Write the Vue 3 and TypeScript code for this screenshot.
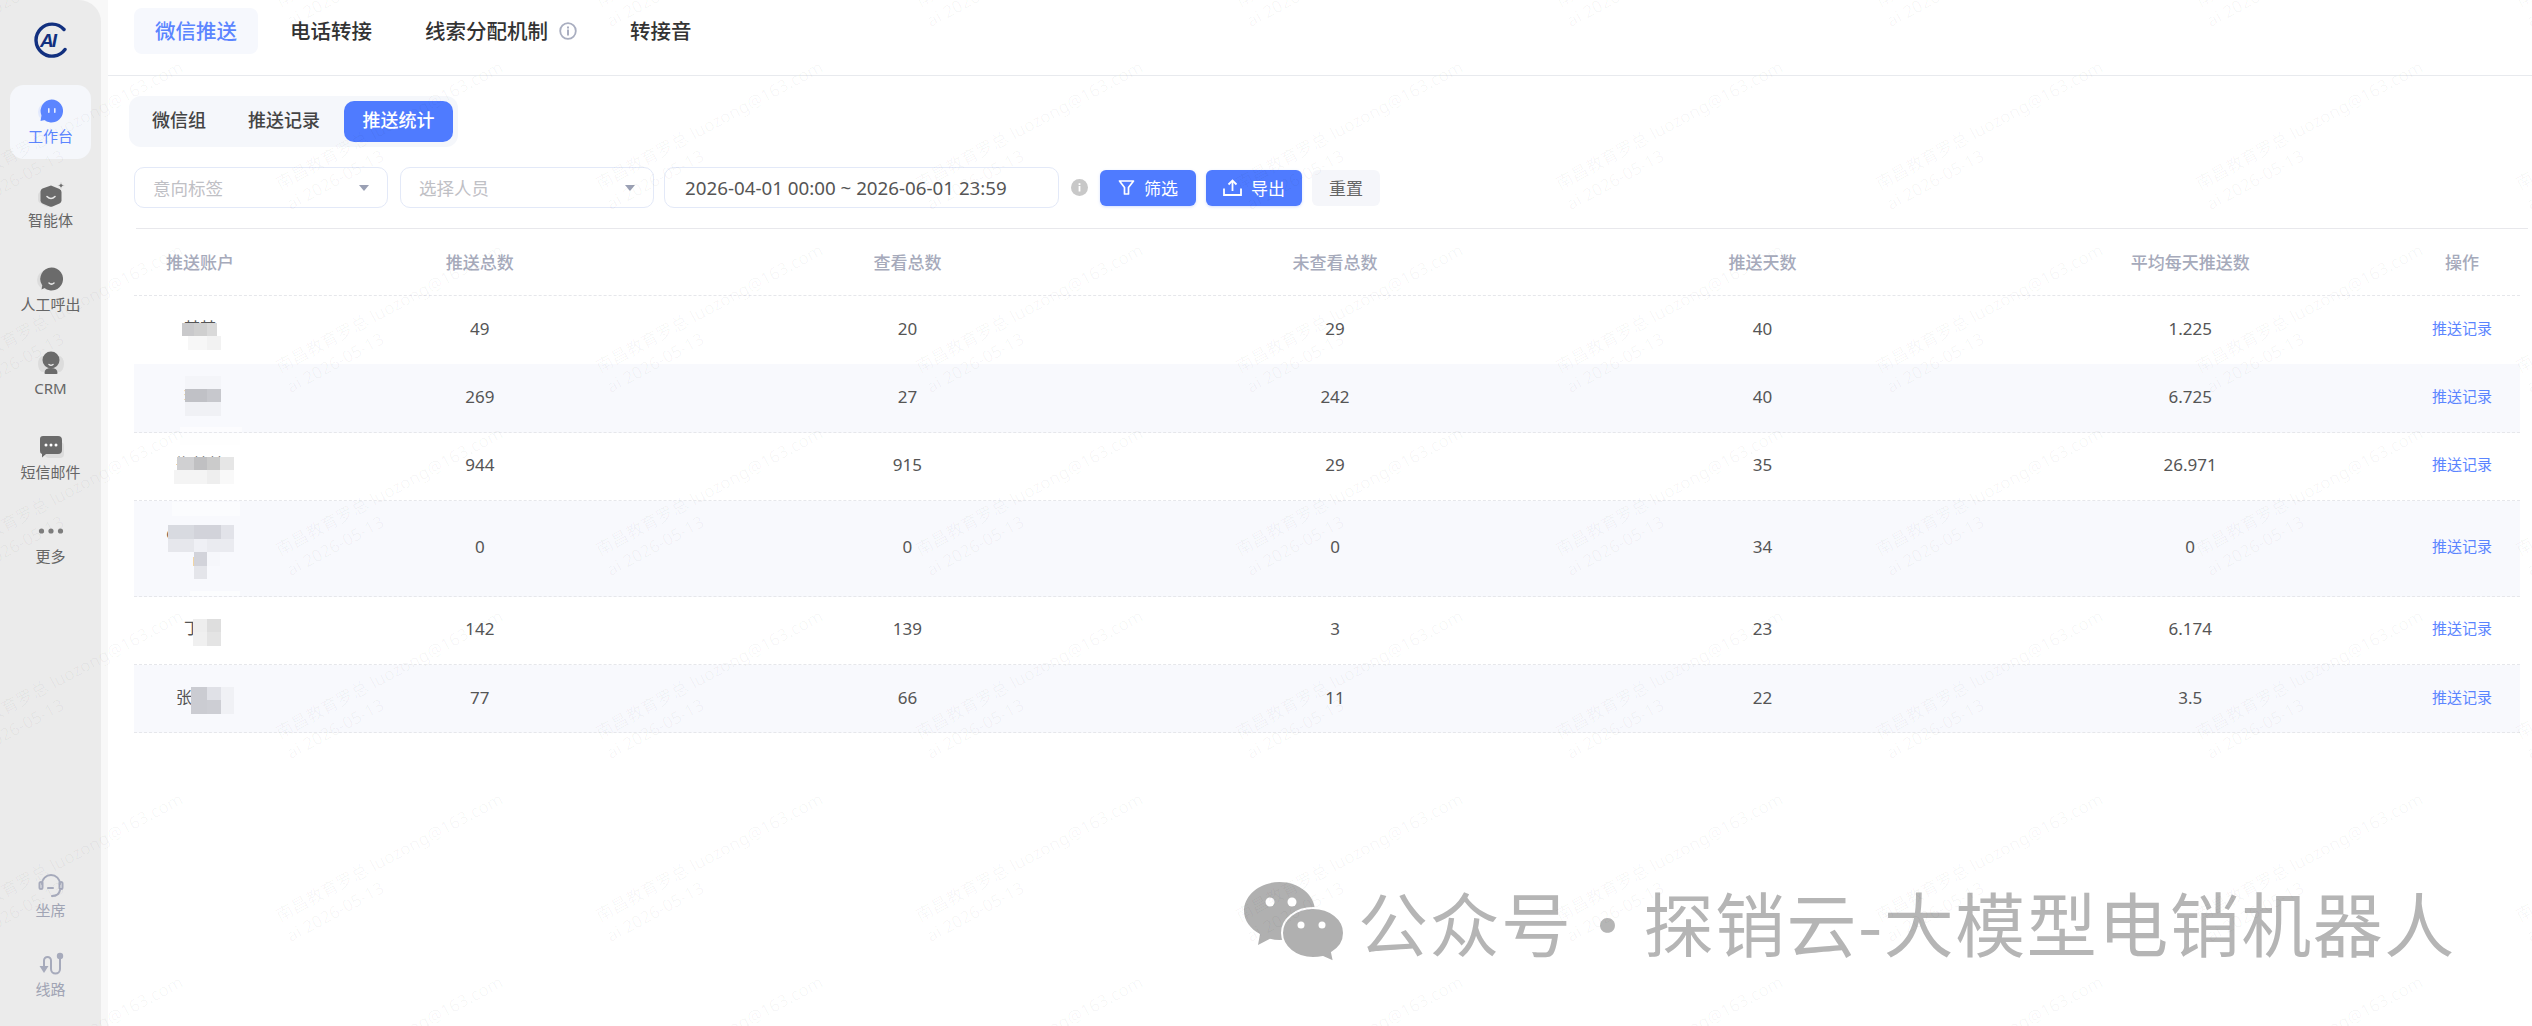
<script setup lang="ts">
type Block = [number, number, number, number, string];

interface Row {
  top: number;
  name: string;
  cells: (string | number)[];
  mosaic: Block[];
}

const primaryTabs = ["微信推送", "电话转接", "线索分配机制", "转接音"];
const subTabs = ["微信组", "推送记录", "推送统计"];
const headers = ["推送账户", "推送总数", "查看总数", "未查看总数", "推送天数", "平均每天推送数", "操作"];

// mosaic blocks are in page coordinates, the same as the row tops
const rows: Row[] = [
  {
    top: 296,
    name: "某某",
    cells: [49, 20, 29, 40, 1.225],
    mosaic: [
      [182, 323, 12, 13, "#c9c9cb"],
      [194, 323, 13, 13, "#cfcfcf"],
      [207, 323, 10, 13, "#d9d9d9"],
      [188, 336, 19, 14, "#f7f7f7"],
      [207, 336, 14, 14, "#f2f2f2"],
    ],
  },
  {
    top: 364,
    name: "李某",
    cells: [269, 27, 242, 40, 6.725],
    mosaic: [
      [185, 376, 36, 13, "#f4f5f9"],
      [185, 389, 22, 13, "#c0c1c6"],
      [207, 389, 14, 13, "#c7c8cd"],
      [185, 402, 36, 14, "#f0f1f5"],
      [180, 427, 62, 5, "#fcfcfe"],
    ],
  },
  {
    top: 432,
    name: "郑某某",
    cells: [944, 915, 29, 35, 26.971],
    mosaic: [
      [180, 432, 60, 12, "#fefefe"],
      [177, 456, 17, 13, "#d0d0d2"],
      [194, 456, 13, 13, "#c0c0c2"],
      [207, 456, 13, 13, "#cbcbcb"],
      [220, 456, 14, 13, "#e6e6e6"],
      [174, 469, 33, 14, "#f4f4f4"],
      [207, 469, 13, 14, "#eeeeee"],
      [220, 469, 14, 14, "#f9f9f9"],
    ],
  },
  {
    top: 500,
    name: "chenxiao m",
    cells: [0, 0, 0, 34, 0],
    mosaic: [
      [172, 501, 68, 14, "#fbfcfe"],
      [168, 524, 26, 14, "#d8dae0"],
      [194, 524, 27, 14, "#d2d3da"],
      [221, 524, 13, 14, "#e2e3e9"],
      [168, 538, 26, 13, "#e6e7ec"],
      [194, 538, 13, 13, "#eff0f5"],
      [207, 538, 27, 13, "#eaebf0"],
      [194, 551, 13, 14, "#d2d3da"],
      [207, 551, 13, 14, "#f6f7fb"],
      [194, 565, 13, 13, "#e4e5ea"],
      [190, 590, 50, 5, "#fcfdfe"],
    ],
  },
  {
    top: 596,
    name: "丁某",
    cells: [142, 139, 3, 23, 6.174],
    mosaic: [
      [193, 618, 14, 13, "#eeeeee"],
      [207, 618, 14, 13, "#dedede"],
      [193, 631, 14, 14, "#f0f0f0"],
      [207, 631, 14, 14, "#e4e4e4"],
    ],
  },
  {
    top: 664,
    name: "张某某",
    cells: [77, 66, 11, 22, 3.5],
    mosaic: [
      [191, 686, 16, 13, "#cbccd2"],
      [207, 686, 14, 13, "#e0e1e7"],
      [221, 686, 13, 13, "#f0f1f5"],
      [191, 699, 16, 14, "#cbccd2"],
      [207, 699, 14, 14, "#cdced4"],
      [221, 699, 13, 14, "#f0f1f5"],
    ],
  },
];

const blockStyle = (b: Block, top: number) => ({
  left: `${b[0] - 134}px`,
  top: `${b[1] - top}px`,
  width: `${b[2]}px`,
  height: `${b[3]}px`,
  background: b[4],
});

const watermarks = Array.from({ length: 63 }, (_, i) => i);
</script>

<template>
  <div class="app">
    <aside class="sidebar">
      <svg class="logo" viewBox="0 0 36 36" aria-label="logo">
        <path d="M31 7.500A16 16 0 1 0 32 27.500" fill="none" stroke="#12307f" stroke-width="3.400" stroke-linecap="round" />
        <text x="7" y="25" class="logo-text">AI</text>
      </svg>

      <div class="nav">
        <div class="nav-item active">
          <svg class="nav-icon" viewBox="0 0 28 26">
            <circle cx="11" cy="14" r="10" fill="#e2e9fd" />
            <path d="M14.500 1.500a11.500 11.500 0 1 1-7 20.600L3.500 23l1-5.500A11.500 11.500 0 0 1 14.500 1.500z" fill="#5b85ff" />
            <rect x="11" y="10" width="1.600" height="5" rx=".8" fill="#fff" opacity=".85" />
            <rect x="17" y="10" width="1.600" height="5" rx=".8" fill="#fff" opacity=".85" />
          </svg>
          <span>工作台</span>
        </div>
        <div class="nav-item">
          <svg class="nav-icon" viewBox="0 0 28 26">
            <path d="M3 10l8-3 7 6v8l-8 4-7-4q-2-1-2-3v-5q0-2 2-3z" fill="#dcdcdc" />
            <path d="M14 3.500l8.500 3.500q2 1 2 3v8.500q0 2-2 3l-7 3q-1.500.5-3 0l-7-3q-2-1-2-3V9.500q0-2 2-3z" fill="#6b6b6b" />
            <path d="M10 14.500q4 4 8 0" fill="none" stroke="#e8e8e8" stroke-width="1.600" stroke-linecap="round" />
            <path d="M24 0l1 2.600 2.600 1-2.600 1-1 2.600-1-2.600-2.600-1 2.600-1z" fill="#6b6b6b" stroke="#ebebeb" stroke-width=".8" />
          </svg>
          <span>智能体</span>
        </div>
        <div class="nav-item">
          <svg class="nav-icon" viewBox="0 0 28 26">
            <circle cx="10" cy="14" r="10" fill="#dcdcdc" />
            <path d="M14.500 1.500a11.500 11.500 0 1 1-7 20.600L4.500 23.500l.8-4A11.500 11.500 0 0 1 14.500 1.500z" fill="#6b6b6b" />
            <path d="M12 17q2.500 2.200 5 0" fill="none" stroke="#e8e8e8" stroke-width="1.500" stroke-linecap="round" />
          </svg>
          <span>人工呼出</span>
        </div>
        <div class="nav-item">
          <svg class="nav-icon" viewBox="0 0 28 26">
            <ellipse cx="6" cy="14" rx="5" ry="8" fill="#dcdcdc" />
            <ellipse cx="22" cy="14" rx="5" ry="8" fill="#dcdcdc" />
            <circle cx="14" cy="10" r="8.500" fill="#6b6b6b" />
            <path d="M7.500 23q0-5 6.500-5t6.500 5q0 1-1 1h-11q-1 0-1-1z" fill="#6b6b6b" />
            <path d="M12 14.500q2 1.500 4 0" fill="none" stroke="#e8e8e8" stroke-width="1.500" stroke-linecap="round" />
          </svg>
          <span>CRM</span>
        </div>
        <div class="nav-item">
          <svg class="nav-icon" viewBox="0 0 28 26">
            <rect x="8" y="8" width="19" height="16" rx="4" fill="#dcdcdc" />
            <path d="M6 2h15a4 4 0 0 1 4 4v10a4 4 0 0 1-4 4H9l-4 3.500V20a3 3 0 0 1-2-3V5a3 3 0 0 1 3-3z" fill="#6b6b6b" />
            <circle cx="9" cy="11" r="1.500" fill="#fff" />
            <circle cx="14" cy="11" r="1.500" fill="#fff" />
            <circle cx="19" cy="11" r="1.500" fill="#fff" />
          </svg>
          <span>短信邮件</span>
        </div>
        <div class="nav-item">
          <svg class="nav-icon" viewBox="0 0 28 26">
            <circle cx="4.500" cy="13" r="2.600" fill="#7d7d7d" />
            <circle cx="14" cy="13" r="2.600" fill="#7d7d7d" />
            <circle cx="23.500" cy="13" r="2.600" fill="#7d7d7d" />
          </svg>
          <span>更多</span>
        </div>
      </div>

      <div class="nav nav-bottom">
        <div class="nav-item muted">
          <svg class="nav-icon" viewBox="0 0 28 26" fill="none" stroke="#a6aabb" stroke-width="2" stroke-linecap="round">
            <path d="M5 12a9 9 0 0 1 18 0" />
            <rect x="2.500" y="10" width="3" height="7" rx="1.500" />
            <rect x="22.500" y="10" width="3" height="7" rx="1.500" />
            <path d="M23 18q-1 6-8 6" />
            <path d="M11 16h5" />
          </svg>
          <span>坐席</span>
        </div>
        <div class="nav-item muted">
          <svg class="nav-icon" viewBox="0 0 28 26" fill="none" stroke="#a6aabb" stroke-width="2">
            <path d="M7 17V9.500a3.500 3.500 0 0 1 7 0V18a4 4 0 0 0 9 0V7" />
            <path d="M2.500 15h9L7 22z" fill="#a6aabb" stroke="none" />
            <circle cx="23" cy="5" r="3.200" fill="#a6aabb" stroke="none" />
          </svg>
          <span>线路</span>
        </div>
      </div>
    </aside>

    <main class="main">
      <header class="topbar">
        <div
          v-for="(tab, i) in primaryTabs"
          :key="tab"
          class="top-tab"
          :class="{ current: i === 0 }"
        >
          <span class="top-label">{{ tab }}</span>
          <svg v-if="i === 2" class="tip" viewBox="0 0 18 18">
            <circle cx="9" cy="9" r="7.800" fill="none" stroke="#a9aec0" stroke-width="1.800" />
            <rect x="8" y="7.500" width="2" height="6" fill="#a9aec0" />
            <rect x="8" y="4.500" width="2" height="2" fill="#a9aec0" />
          </svg>
        </div>
      </header>

      <section class="content">
        <div class="sub-tabs">
          <div
            v-for="(tab, i) in subTabs"
            :key="tab"
            class="sub-tab"
            :class="{ current: i === 2 }"
          >
            {{ tab }}
          </div>
        </div>

        <div class="filters">
          <div class="field select">
            <span class="placeholder">意向标签</span><i class="caret" />
          </div>
          <div class="field select">
            <span class="placeholder">选择人员</span><i class="caret" />
          </div>
          <div class="field date">2026-04-01 00:00 ~ 2026-06-01 23:59</div>
          <svg class="date-tip" viewBox="0 0 17 17">
            <circle cx="8.500" cy="8.500" r="8.500" fill="#c8c8c8" />
            <rect x="7.600" y="7" width="1.800" height="5.500" fill="#fff" />
            <rect x="7.600" y="4.200" width="1.800" height="1.800" fill="#fff" />
          </svg>
          <button class="btn primary">
            <svg class="btn-icon" viewBox="0 0 17 17" fill="none" stroke="#fff" stroke-width="1.700" stroke-linejoin="round">
              <path d="M1.500 2h14l-5 6.500V15h-4V8.500z" />
            </svg>
            筛选
          </button>
          <button class="btn primary">
            <svg class="btn-icon wide" viewBox="0 0 19 17" fill="none" stroke="#fff" stroke-width="1.800">
              <path d="M9.500 12V2" />
              <path d="M5.500 5.500l4-4 4 4" />
              <path d="M1 9.500v6.500h17V9.500" />
            </svg>
            导出
          </button>
          <button class="btn plain">重置</button>
        </div>

        <div class="rule" />

        <div class="table">
          <div class="row head">
            <div v-for="h in headers" :key="h" class="cell">{{ h }}</div>
          </div>
          <div v-for="row in rows" :key="row.top" class="row body">
            <div class="cell name">{{ row.name }}</div>
            <div v-for="(c, i) in row.cells" :key="i" class="cell">{{ c }}</div>
            <div class="cell link">推送记录</div>
            <span
              v-for="(b, i) in row.mosaic"
              :key="'m' + i"
              class="mosaic"
              :style="blockStyle(b, row.top)"
            />
          </div>
        </div>
      </section>
    </main>

    <div class="brand">
      <svg class="brand-icon" viewBox="0 0 100 80">
        <path d="M35.500 0C55 0 71 13 71 29S55 58 35.500 58q-5 0-9.500-1.200L14 63l2-11C6.500 47 0 38.500 0 29 0 13 16 0 35.500 0z" fill="#b0b0b0" />
        <path d="M69 26c17 0 31 11 31 25 0 8-4.500 15-12 19.500L90 80l-11-5q-5 1-10 1c-17 0-31-11-31-25s14-25 31-25z" fill="#b0b0b0" stroke="#fff" stroke-width="2" />
        <circle cx="26" cy="20" r="4.500" fill="#fff" />
        <circle cx="48" cy="20" r="4.500" fill="#fff" />
        <circle cx="57" cy="43" r="3.500" fill="#fff" />
        <circle cx="78" cy="43" r="3.500" fill="#fff" />
      </svg>
      <span class="brand-text">公众号<b class="dot">·</b>探销云-大模型电销机器人</span>
    </div>

    <div class="watermarks" aria-hidden="true">
      <div v-for="n in watermarks" :key="n" class="mark">
        <div class="mark-text">南昌教育罗总 luozong@163.com<br />ai 2026-05-13</div>
      </div>
    </div>
  </div>
</template>

<style>
html,
body {
  margin: 0;
  overflow: hidden;
}
</style>

<style scoped>
.app {
  position: relative;
  display: flex;
  width: 2532px;
  height: 1026px;
  overflow: hidden;
  background: #f8f8f8;
  color: #555;
  font-family: "Noto Sans", "Noto Sans CJK SC", sans-serif;
}

/* sidebar */
.sidebar {
  flex: none;
  width: 101px;
  display: flex;
  flex-direction: column;
  align-items: center;
  box-sizing: border-box;
  padding: 22px 0 14px;
  background: #ebebeb;
  border-top-right-radius: 22px;
}
.logo {
  flex: none;
  width: 36px;
  height: 36px;
  margin-bottom: 27px;
}
.logo-text {
  fill: #12307f;
  font: italic 700 19px "Liberation Sans", sans-serif;
  letter-spacing: -2px;
}
.nav {
  display: flex;
  flex-direction: column;
  gap: 10px;
}
.nav-bottom {
  margin-top: auto;
  gap: 5px;
}
.nav-item {
  width: 81px;
  height: 74px;
  box-sizing: border-box;
  padding-top: 13px;
  display: flex;
  flex-direction: column;
  align-items: center;
  border-radius: 14px;
  font-size: 15px;
  line-height: 24px;
  color: #666;
}
.nav-item.active {
  background: #f5f7fb;
  color: #5b85ff;
}
.nav-item.muted {
  color: #a0a4b4;
}
.nav-icon {
  flex: none;
  width: 28px;
  height: 26px;
}

/* main */
.main {
  flex: 1;
  min-width: 0;
  margin-left: 7px;
  background: #fff;
}
.topbar {
  height: 67px;
  padding: 8px 0 0 26px;
  display: flex;
  align-items: flex-start;
  gap: 11px;
  border-bottom: 1px solid #e8eaee;
}
.top-tab {
  height: 46px;
  padding: 0 21px 2px;
  box-sizing: border-box;
  display: flex;
  align-items: center;
  gap: 11px;
  border-radius: 8px;
  font-size: 20.500px;
  font-weight: 500;
  color: #333;
}
.top-tab.current {
  background: #f6f8fd;
  color: #5b85ff;
}
.tip {
  width: 18px;
  height: 18px;
  margin-top: 2px;
}
.content {
  padding: 20px 12px 0 26px;
}
.sub-tabs {
  display: inline-flex;
  gap: 6px;
  margin-left: -5px;
  padding: 5px;
  border-radius: 12px;
  background: #f5f7fb;
  vertical-align: top;
}
.sub-tab {
  height: 41px;
  padding: 0 18px;
  line-height: 39px;
  border-radius: 10px;
  font-size: 18px;
  font-weight: 500;
  color: #444;
}
.sub-tab.current {
  padding: 0 18.500px;
  background: #4f7bff;
  color: #fff;
}
.filters {
  display: flex;
  align-items: center;
  margin-top: 20px;
  height: 41px;
}
.field {
  flex: none;
  height: 41px;
  box-sizing: border-box;
  display: flex;
  align-items: center;
  border: 1px solid #e3e9f8;
  border-radius: 10px;
  background: #fff;
}
.select {
  width: 254px;
  margin-right: 12px;
  padding: 0 18px;
  justify-content: space-between;
}
.select + .select {
  margin-right: 10px;
}
.placeholder {
  font-size: 17.500px;
  color: #bfc0c5;
}
.caret {
  width: 0;
  height: 0;
  border-left: 5px solid transparent;
  border-right: 5px solid transparent;
  border-top: 6px solid #9aa0b4;
}
.date {
  width: 395px;
  padding-left: 20px;
  font-size: 18.750px;
  color: #555;
}
.date-tip {
  flex: none;
  width: 17px;
  height: 17px;
  margin: 0 12px;
}
.btn {
  flex: none;
  height: 36px;
  margin-right: 10px;
  border: 0;
  border-radius: 6px;
  display: flex;
  align-items: center;
  justify-content: center;
  font: inherit;
  font-size: 17px;
}
.primary {
  width: 96px;
  gap: 9px;
  background: #4f7bff;
  color: #fff;
  box-shadow: 0 1px 3px rgba(79, 123, 255, 0.25);
}
.plain {
  width: 68px;
  background: #f5f6fa;
  color: #666;
}
.btn-icon {
  width: 17px;
  height: 17px;
}
.btn-icon.wide {
  width: 19px;
}
.rule {
  height: 1px;
  margin: 20px -8px 0 2px;
  background: #e8e8ec;
}

/* table */
.row {
  position: relative;
  display: grid;
  grid-template-columns: 132px repeat(5, 1fr) 116px;
  align-items: center;
  border-bottom: 1px dashed #e6e7eb;
  text-align: center;
}
.head {
  height: 67px;
  box-sizing: border-box;
  padding-bottom: 2px;
  font-size: 17px;
  font-weight: 500;
  color: #a6aabb;
}
.body {
  padding: 18.700px 0 21.700px;
  font-size: 17px;
  line-height: 27px;
}
.table .body:nth-child(2) {
  border-bottom-color: transparent;
}
.table .body:nth-child(odd) {
  background: #f8f9fd;
}
.name {
  justify-self: center;
  max-width: 80px;
  font-size: 16px;
}
.link {
  font-size: 15px;
  color: #5b85ff;
}
.mosaic {
  position: absolute;
}

/* overlays */
.brand {
  position: absolute;
  left: 1244px;
  top: 882px;
  display: flex;
  align-items: center;
  gap: 14px;
  color: #b5b5b5;
  font-family: "Noto Sans CJK SC", sans-serif;
}
.brand-icon {
  flex: none;
  width: 100px;
  height: 80px;
}
.brand-text {
  font-size: 70px;
  line-height: 78px;
  letter-spacing: 1.500px;
  white-space: nowrap;
}
.dot {
  display: inline-block;
  width: 71px;
  font-weight: 400;
  text-align: center;
}
.watermarks {
  position: absolute;
  left: -40px;
  top: 7px;
  display: grid;
  grid-template-columns: repeat(9, 320px);
  grid-auto-rows: 183px;
  pointer-events: none;
}
.mark {
  position: relative;
}
.mark-text {
  position: absolute;
  left: 0;
  top: -18px;
  transform: rotate(-28deg);
  transform-origin: 0 18px;
  font-size: 17px;
  line-height: 23px;
  white-space: nowrap;
  color: rgba(0, 0, 0, 0.035);
}
</style>
